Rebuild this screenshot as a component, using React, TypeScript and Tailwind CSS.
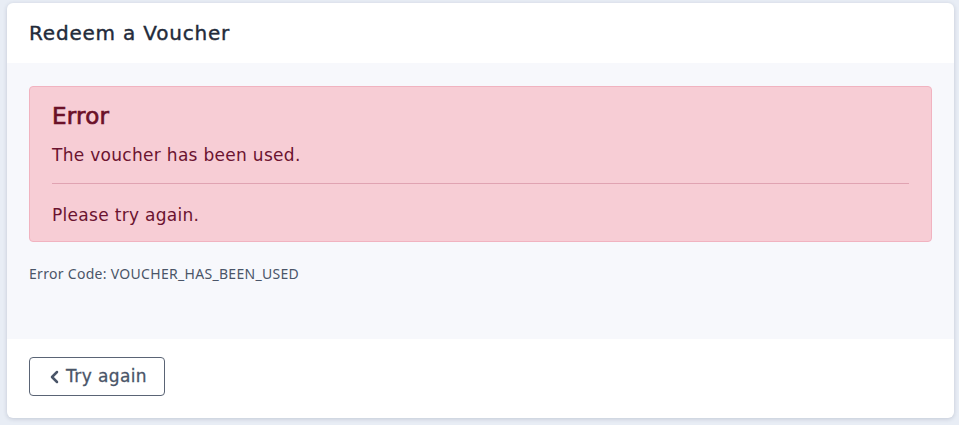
import React from 'react';

function ChevronLeft() {
  return (
    <svg className="w-[16px] h-[16px]" viewBox="0 0 24 24" fill="none" stroke="currentColor" strokeWidth="3.8" strokeLinecap="round" strokeLinejoin="round" aria-hidden="true">
      <path d="M15 4.5l-7.5 7.5 7.5 7.5" />
    </svg>
  );
}

export default function App() {
  return (
    <div className="min-h-[425px] bg-[#e8edf5] pt-[3px] pl-[7px] pr-[5px] font-['DejaVu_Sans',sans-serif]">
      <div className="bg-white rounded-[6px] shadow-[0_1px_4px_rgba(30,41,70,0.18)] overflow-hidden">
        <div className="h-[60px] px-[22px] flex items-center">
          <h1 className="text-[20px] tracking-[0.8px] text-[#232b3a] [-webkit-text-stroke:0.4px_#232b3a]">Redeem a Voucher</h1>
        </div>
        <div className="bg-[#f7f8fc] px-[22px] pt-[23px] h-[276px]">
          <div className="bg-[#f7cdd5] border border-[#f1b3c0] rounded-[4px] px-[22px] pt-[14px] pb-[14px] text-[#6b1330]">
            <h2 className="text-[23px] leading-[30px] tracking-[0.2px] [-webkit-text-stroke:0.7px_#6b1028] text-[#6b1028]">Error</h2>
            <p className="text-[17px] leading-[24px] tracking-[0.3px] mt-[12px]">The voucher has been used.</p>
            <div className="border-t border-[#e0a3b2] mt-[16px] mb-[19px]" />
            <p className="text-[17px] leading-[24px] tracking-[0.3px]">Please try again.</p>
          </div>
          <p className="mt-[21px] text-[14px] tracking-[0.3px] text-[#4a5568] font-['Noto_Sans',sans-serif]">Error Code: VOUCHER_HAS_BEEN_USED</p>
        </div>
        <div className="h-[79px] px-[22px] pt-[18px]">
          <button className="h-[39px] w-[136px] border border-[#5a6475] rounded-[4px] flex items-center justify-center gap-[3px] text-[#4a5568] text-[17px] tracking-[0.4px] [-webkit-text-stroke:0.3px_#4a5568]">
            <ChevronLeft />
            <span>Try again</span>
          </button>
        </div>
      </div>
    </div>
  );
}
